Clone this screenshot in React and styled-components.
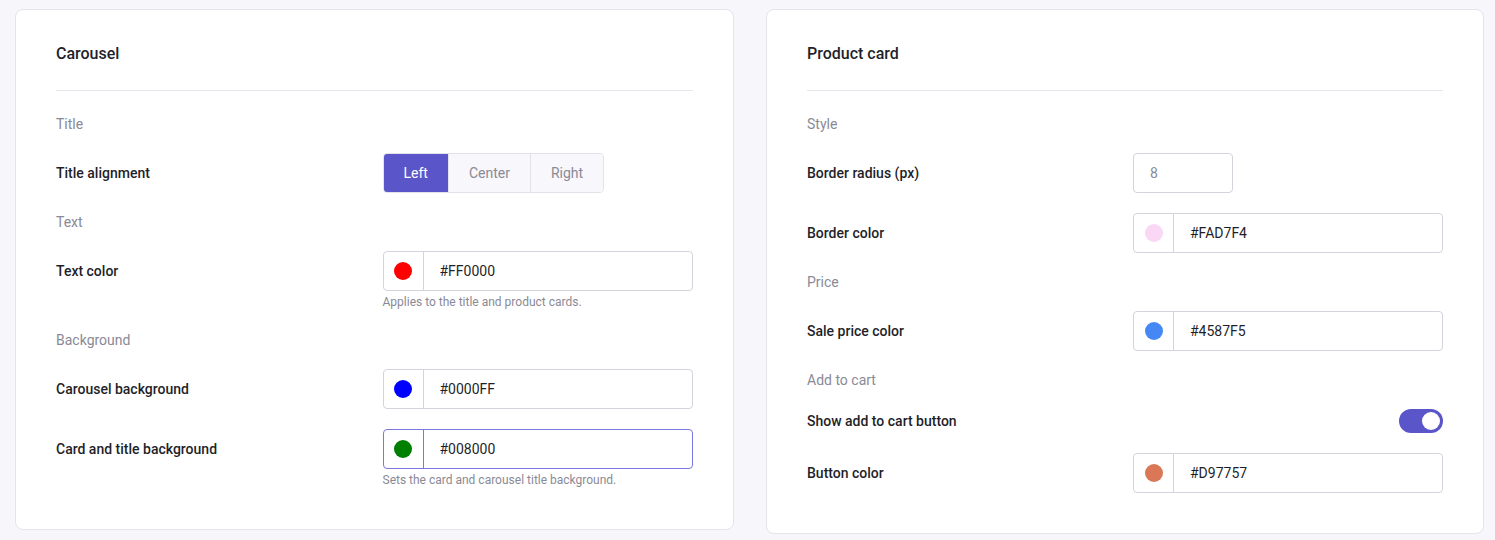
import React from "react";
import styled, { createGlobalStyle } from "styled-components";

const Global = createGlobalStyle`
  html, body { margin: 0; padding: 0; background: #f6f6fb; }
  body { font-family: Roboto, "Noto Sans", "Liberation Sans", sans-serif; color: #1f1f29; }
  * { box-sizing: border-box; }
`;

const Page = styled.div`
  display: grid;
  grid-template-columns: 719px 718px;
  column-gap: 32px;
  align-items: start;
  padding: 9px 11px 0 15px;
  height: 540px;
  overflow: hidden;
`;

const Card = styled.section`
  background: #ffffff;
  border: 1px solid #e4e4ec;
  border-radius: 8px;
  padding: 33px 40px 40px 40px;
`;

const CardTitle = styled.h2`
  margin: 0;
  font-size: 16px;
  line-height: 22px;
  font-weight: 500;
  color: #1f1f29;
  padding-bottom: 25px;
  border-bottom: 1px solid #e6e6ee;
`;

const Body = styled.div`
  display: flex;
  flex-direction: column;
  gap: 20px;
  padding-top: 24px;
`;

const SectionLabel = styled.div`
  font-size: 14px;
  line-height: 18px;
  color: #8a8a96;
`;

const Row = styled.div`
  display: grid;
  grid-template-columns: 1fr 1fr;
  column-gap: 16px;
  align-items: ${(p) => (p.$top ? "start" : "center")};
`;

const Label = styled.div`
  font-size: 14px;
  font-weight: 500;
  color: #1f1f29;
  line-height: 40px;
  height: ${(p) => (p.$short ? "24px" : "40px")};
  display: flex;
  align-items: center;
`;

const Control = styled.div`
  display: flex;
  flex-direction: column;
  align-items: ${(p) => (p.$end ? "flex-end" : "stretch")};
`;

const Segmented = styled.div`
  display: inline-flex;
  align-self: flex-start;
  height: 40px;
  border: 1px solid #e2e2ea;
  border-radius: 4px;
  overflow: hidden;
`;

const Segment = styled.button`
  border: none;
  border-left: ${(p) => (p.$first ? "none" : "1px solid #e2e2ea")};
  padding: 0 20px;
  font-family: inherit;
  font-size: 14px;
  background: ${(p) => (p.$active ? "#5a55c8" : "#f7f7fc")};
  color: ${(p) => (p.$active ? "#ffffff" : "#8a8a96")};
  cursor: pointer;
`;

const ColorField = styled.div`
  display: flex;
  height: 40px;
  border: 1px solid ${(p) => (p.$focus ? "#7b77e0" : "#d4d4dc")};
  border-radius: 4px;
  background: #fff;
`;

const SwatchCell = styled.div`
  width: 40px;
  flex: none;
  display: flex;
  align-items: center;
  justify-content: center;
  border-right: 1px solid ${(p) => (p.$focus ? "#7b77e0" : "#d4d4dc")};
`;

const Dot = styled.span`
  width: 18px;
  height: 18px;
  border-radius: 50%;
  background: ${(p) => p.$color};
`;

const HexText = styled.div`
  padding-left: 16px;
  display: flex;
  align-items: center;
  font-size: 14px;
  color: #1f1f29;
`;

const Help = styled.div`
  margin-top: 2px;
  font-size: 12px;
  line-height: 18px;
  color: #8a8a96;
`;

const NumberBox = styled.div`
  width: 100px;
  height: 40px;
  border: 1px solid #d4d4dc;
  border-radius: 4px;
  padding-left: 16px;
  display: flex;
  align-items: center;
  font-size: 14px;
  color: #8a8a96;
`;

const Toggle = styled.div`
  width: 44px;
  height: 24px;
  border-radius: 12px;
  background: #5a55c8;
  display: flex;
  align-items: center;
  justify-content: flex-end;
  padding: 0 3px;
`;

const Thumb = styled.span`
  width: 18px;
  height: 18px;
  border-radius: 50%;
  background: #ffffff;
`;

function ColorInput({ color, value, focus }) {
  return (
    <ColorField $focus={focus}>
      <SwatchCell $focus={focus}>
        <Dot $color={color} />
      </SwatchCell>
      <HexText>{value}</HexText>
    </ColorField>
  );
}

export default function App() {
  return (
    <>
      <Global />
      <Page>
        <Card>
          <CardTitle>Carousel</CardTitle>
          <Body>
            <SectionLabel>Title</SectionLabel>
            <Row>
              <Label>Title alignment</Label>
              <Control>
                <Segmented>
                  <Segment $first $active>Left</Segment>
                  <Segment>Center</Segment>
                  <Segment>Right</Segment>
                </Segmented>
              </Control>
            </Row>
            <SectionLabel>Text</SectionLabel>
            <Row $top>
              <Label>Text color</Label>
              <Control>
                <ColorInput color="#FF0000" value="#FF0000" />
                <Help>Applies to the title and product cards.</Help>
              </Control>
            </Row>
            <SectionLabel>Background</SectionLabel>
            <Row>
              <Label>Carousel background</Label>
              <Control>
                <ColorInput color="#0000FF" value="#0000FF" />
              </Control>
            </Row>
            <Row $top>
              <Label>Card and title background</Label>
              <Control>
                <ColorInput color="#008000" value="#008000" focus />
                <Help>Sets the card and carousel title background.</Help>
              </Control>
            </Row>
          </Body>
        </Card>
        <Card>
          <CardTitle>Product card</CardTitle>
          <Body>
            <SectionLabel>Style</SectionLabel>
            <Row>
              <Label>Border radius (px)</Label>
              <Control>
                <NumberBox>8</NumberBox>
              </Control>
            </Row>
            <Row>
              <Label>Border color</Label>
              <Control>
                <ColorInput color="#FAD7F4" value="#FAD7F4" />
              </Control>
            </Row>
            <SectionLabel>Price</SectionLabel>
            <Row>
              <Label>Sale price color</Label>
              <Control>
                <ColorInput color="#4587F5" value="#4587F5" />
              </Control>
            </Row>
            <SectionLabel>Add to cart</SectionLabel>
            <Row>
              <Label $short>Show add to cart button</Label>
              <Control $end>
                <Toggle>
                  <Thumb />
                </Toggle>
              </Control>
            </Row>
            <Row>
              <Label>Button color</Label>
              <Control>
                <ColorInput color="#D97757" value="#D97757" />
              </Control>
            </Row>
          </Body>
        </Card>
      </Page>
    </>
  );
}
